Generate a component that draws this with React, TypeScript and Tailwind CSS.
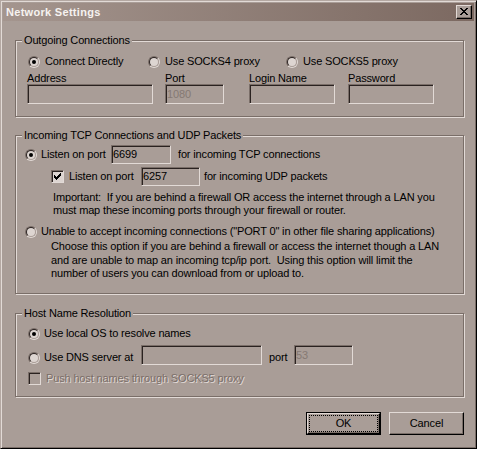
import React from "react";

// win95-style dialog, warm grey scheme
function Radio({ checked = false }: { checked?: boolean }) {
  return (
    <span className="flex h-[12px] w-[12px] shrink-0 rounded-full border border-t-[#7a6e68] border-l-[#7a6e68] border-r-[#e2dad6] border-b-[#e2dad6]">
      <span className="flex h-full w-full items-center justify-center rounded-full border border-t-[#2a2220] border-l-[#2a2220] border-r-[#a99d97] border-b-[#a99d97] bg-[#ddd5d1]">
        {checked && <span className="h-[4px] w-[4px] rounded-full bg-black" />}
      </span>
    </span>
  );
}

function CheckMark() {
  const rows: [number, number, number][] = [
    [6, 0, 1],
    [5, 1, 2],
    [0, 2, 1],
    [4, 2, 3],
    [0, 3, 2],
    [3, 3, 3],
    [0, 4, 5],
    [1, 5, 3],
    [2, 6, 1],
  ];
  return (
    <svg width="7" height="7" viewBox="0 0 7 7" shapeRendering="crispEdges">
      {rows.map(([x, y, w], i) => (
        <rect key={i} x={x} y={y} width={w} height={1} fill="#000" />
      ))}
    </svg>
  );
}

function Check({ checked = false, disabled = false }: { checked?: boolean; disabled?: boolean }) {
  return (
    <span
      className={`flex h-[13px] w-[13px] shrink-0 border border-t-[#7a6e68] border-l-[#7a6e68] border-r-[#e2dad6] border-b-[#e2dad6] pl-[2px] pt-[2px] shadow-[inset_1px_1px_0_#2a2220] ${
        disabled ? "bg-[#a99d97]" : "bg-[#ddd5d1]"
      }`}
    >
      {checked && <CheckMark />}
    </span>
  );
}

function Field({ className = "", value = "", disabled = false }: { className?: string; value?: string; disabled?: boolean }) {
  return (
    <div
      className={`flex shrink-0 items-center border border-t-[#7a6e68] border-l-[#7a6e68] border-r-[#e2dad6] border-b-[#e2dad6] bg-[#a99d97] pl-[1px] shadow-[inset_1px_1px_0_#2a2220] ${
        disabled ? "text-[#857973]" : "text-black"
      } ${className}`}
    >
      {value}
    </div>
  );
}

function Group({ title, className = "", children }: { title: string; className?: string; children: React.ReactNode }) {
  return (
    <div className={`relative ml-[12px] w-[449px] border border-[#7a6e68] shadow-[inset_1px_1px_0_#e2dad6,1px_1px_0_#e2dad6] ${className}`}>
      <span className="absolute left-[6px] top-[-7px] bg-[#a99d97] px-[2px] leading-[13px]">{title}</span>
      {children}
    </div>
  );
}

function CloseGlyph() {
  const rows: [number, number, number][] = [
    [0, 0, 2], [6, 0, 2],
    [1, 1, 2], [5, 1, 2],
    [2, 2, 4],
    [3, 3, 2],
    [2, 4, 4],
    [1, 5, 2], [5, 5, 2],
    [0, 6, 2], [6, 6, 2],
  ];
  return (
    <svg width="8" height="7" viewBox="0 0 8 7" shapeRendering="crispEdges">
      {rows.map(([x, y, w], i) => (
        <rect key={i} x={x} y={y} width={w} height={1} fill="#000" />
      ))}
    </svg>
  );
}

export default function App() {
  return (
    <div className="h-[449px] w-[477px] bg-[#a99d97] font-['Liberation_Sans',Arial,sans-serif] text-[11px] leading-[13px] tracking-[-0.15px] text-black">
      <div className="h-[449px] w-[477px] border border-t-[#b4a8a2] border-l-[#b4a8a2] border-r-black border-b-black p-[2px] shadow-[inset_1px_1px_0_#e2dad6,inset_-1px_-1px_0_#7a6e68]">
        {/* Title bar */}
        <div className="flex h-[18px] items-center justify-between bg-linear-to-r from-[#a4958e] to-[#7c6961] pl-[3px] pr-[2px]">
          <span className="font-bold tracking-[0.3px] text-[#f6f2f0]">Network Settings</span>
          <button className="flex h-[14px] w-[16px] items-center justify-center border border-t-[#e2dad6] border-l-[#e2dad6] border-r-black border-b-black bg-[#a99d97] pb-[1px] shadow-[inset_-1px_-1px_0_#7a6e68]">
            <CloseGlyph />
          </button>
        </div>

        {/* Outgoing */}
        <Group title="Outgoing Connections" className="mt-[19px] h-[77px]">
          <div className="pt-[14px]">
            <div className="flex h-[13px] items-center pl-[12px]">
              <div className="flex w-[120px] items-center gap-[5px]">
                <Radio checked />
                <span>Connect Directly</span>
              </div>
              <div className="flex w-[138px] items-center gap-[5px]">
                <Radio />
                <span>Use SOCKS4 proxy</span>
              </div>
              <div className="flex items-center gap-[5px]">
                <Radio />
                <span>Use SOCKS5 proxy</span>
              </div>
            </div>
            <div className="mt-[4px] flex h-[12px] pl-[11px] leading-[12px]">
              <span className="w-[138px]">Address</span>
              <span className="w-[84px]">Port</span>
              <span className="w-[99px]">Login Name</span>
              <span>Password</span>
            </div>
            <div className="flex pl-[11px]">
              <div className="w-[138px]">
                <Field className="h-[20px] w-[126px]" />
              </div>
              <div className="w-[84px]">
                <Field className="h-[20px] w-[59px]" value="1080" disabled />
              </div>
              <div className="w-[99px]">
                <Field className="h-[20px] w-[86px]" />
              </div>
              <Field className="h-[20px] w-[86px]" />
            </div>
          </div>
        </Group>

        {/* Incoming */}
        <Group title="Incoming TCP Connections and UDP Packets" className="mt-[18px] h-[159px]">
          <div className="pt-[9px]">
            <div className="flex h-[19px] items-center pl-[9px]">
              <Radio checked />
              <span className="ml-[4px] w-[70px]">Listen on port</span>
              <Field className="h-[19px] w-[60px]" value="6699" />
              <span className="ml-[7px]">for incoming TCP connections</span>
            </div>
            <div className="mt-[3px] flex h-[19px] items-center pl-[35px]">
              <Check checked />
              <span className="ml-[5px] w-[72px]">Listen on port</span>
              <Field className="h-[19px] w-[59px]" value="6257" />
              <span className="ml-[4px]">for incoming UDP packets</span>
            </div>
            <p className="mt-[5px] whitespace-pre pl-[37px] leading-[13px]">
              {"Important:  If you are behind a firewall OR access the internet through a LAN you\nmust map these incoming ports through your firewall or router."}
            </p>
            <div className="mt-[8px] flex h-[13px] items-center pl-[9px]">
              <Radio />
              <span className="ml-[4px]">Unable to accept incoming connections ("PORT 0" in other file sharing applications)</span>
            </div>
            <p className="mt-[2px] whitespace-pre pl-[35px] leading-[13.5px]">
              {"Choose this option if you are behind a firewall or access the internet though a LAN\nand are unable to map an incoming tcp/ip port.  Using this option will limit the\nnumber of users you can download from or upload to."}
            </p>
          </div>
        </Group>

        {/* Host name */}
        <Group title="Host Name Resolution" className="mt-[19px] h-[84px]">
          <div className="pt-[13px]">
            <div className="flex h-[13px] items-center pl-[12px]">
              <Radio checked />
              <span className="ml-[4px]">Use local OS to resolve names</span>
            </div>
            <div className="mt-[5px] flex h-[20px] items-start pl-[12px]">
              <div className="mt-[6px] flex h-[13px] w-[113px] items-center">
                <Radio />
                <span className="ml-[4px]">Use DNS server at</span>
              </div>
              <Field className="h-[20px] w-[121px]" />
              <span className="ml-[7px] mt-[6px] w-[25px]">port</span>
              <Field className="h-[20px] w-[59px]" value="53" disabled />
            </div>
            <div className="mt-[7px] flex h-[13px] items-center pl-[12px]">
              <Check disabled />
              <span className="ml-[5px] text-[#7a6e68] [text-shadow:1px_1px_0_#e2dad6]">Push host names through SOCKS5 proxy</span>
            </div>
          </div>
        </Group>

        {/* Buttons */}
        <div className="ml-[12px] mt-[15px] flex w-[449px] justify-end gap-[8px]">
          <button className="h-[23px] w-[75px] border border-black">
            <div className="h-full w-full border border-t-[#e2dad6] border-l-[#e2dad6] border-r-black border-b-black p-[1px] shadow-[inset_-1px_-1px_0_#7a6e68]">
              <div className="flex h-full w-full items-center justify-center border border-dotted border-black pb-[1px]">OK</div>
            </div>
          </button>
          <button className="flex h-[23px] w-[75px] items-center justify-center border border-t-[#e2dad6] border-l-[#e2dad6] border-r-black border-b-black pb-[1px] shadow-[inset_-1px_-1px_0_#7a6e68]">
            Cancel
          </button>
        </div>
      </div>
    </div>
  );
}
